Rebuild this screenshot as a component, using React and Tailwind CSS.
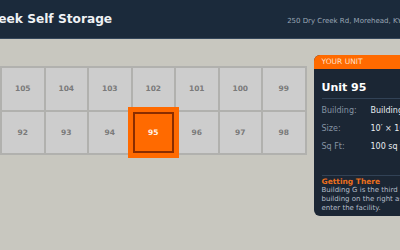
export default function App() {
  const top = [105, 104, 103, 102, 101, 100, 99];
  const bottom = [92, 93, 94, 95, 96, 97, 98];
  const rows = [
    ["Building:", "Building G"],
    ["Size:", "10′ × 10′"],
    ["Sq Ft:", "100 sq ft"],
  ];

  return (
    <div className="h-[250px] w-[400px] overflow-hidden bg-[#c8c7bf] font-['DejaVu_Sans',sans-serif]">
      <header className="flex h-[39px] items-center border-b border-[#34465a] bg-[#1b2a3b]">
        <div className="ml-[-45px] shrink-0 whitespace-nowrap text-[12.2px] font-bold text-[#eef1f4]">
          Dry Creek Self Storage
        </div>
        <div className="ml-[175px] mt-[4px] shrink-0 whitespace-nowrap text-[7px] text-[#9aa6b5]">
          250 Dry Creek Rd, Morehead, KY
        </div>
      </header>

      <main className="flex items-start gap-[7px] pt-[16px]">
        <div className="mt-[11px] grid w-[306.5px] shrink-0 grid-cols-7 gap-[2px] bg-[#b1b1ae] p-[2px]">
          {[...top, ...bottom].map((n) => {
            const active = n === 95;
            return (
              <div
                key={n}
                className={
                  active
                    ? "relative z-10 flex h-[41.5px] items-center justify-center border-2 border-[#8a2d00] bg-[#ff6a00] text-[7.5px] font-bold text-[#fff3ea] shadow-[0_0_0_5px_#ff6a00]"
                    : "flex h-[41.5px] items-center justify-center bg-[#cdcdcd] text-[7.5px] font-bold text-[#7a7a7a]"
                }
              >
                {n}
              </div>
            );
          })}
        </div>

        <aside className="w-[130px] shrink-0 overflow-hidden rounded-l-[6px] bg-[#1b2634]">
          <div className="flex h-[14px] items-center bg-[#ff6a00] px-2 text-[7.5px] uppercase text-[#ffe0c8]">
            Your Unit
          </div>
          <div className="px-2">
            <div className="border-b border-[#324256] pb-[3px] pt-[12px] text-[11px] font-bold leading-[14px] text-white">
              Unit 95
            </div>
            <div className="pt-[3px]">
              {rows.map(([k, v]) => (
                <div key={k} className="flex h-[18px] items-center whitespace-nowrap text-[8px]">
                  <span className="w-[49px] shrink-0 text-[#8593a3]">{k}</span>
                  <span className="text-[#e8ecf0]">{v}</span>
                </div>
              ))}
            </div>
            <div className="mt-[19px] border-t border-[#324256] pb-[3px] pt-[2px]">
              <div className="text-[7.5px] font-bold leading-[8px] text-[#ec6f1c]">Getting There</div>
              <p className="whitespace-nowrap text-[7px] leading-[9px] text-[#b3bdc9]">
                Building G is the third
                <br />
                building on the right as you
                <br />
                enter the facility.
              </p>
            </div>
          </div>
        </aside>
      </main>
    </div>
  );
}
